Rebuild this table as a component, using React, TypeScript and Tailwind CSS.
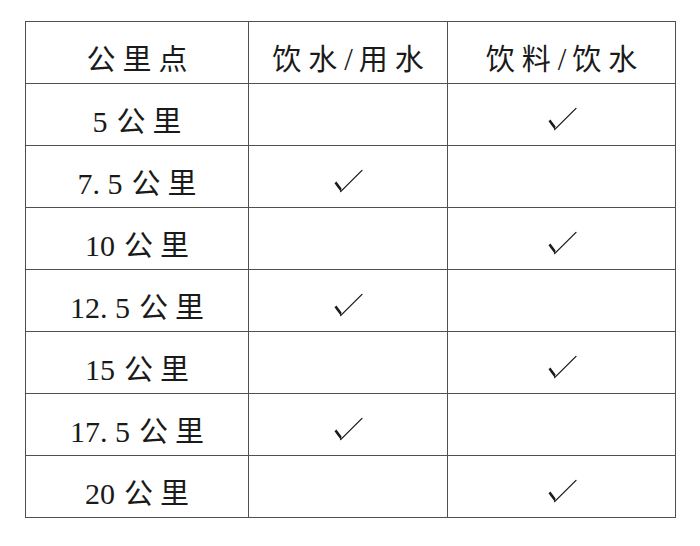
const rows: { km: string; water: boolean; drink: boolean }[] = [
  { km: '5', water: false, drink: true },
  { km: '7. 5', water: true, drink: false },
  { km: '10', water: false, drink: true },
  { km: '12. 5', water: true, drink: false },
  { km: '15', water: false, drink: true },
  { km: '17. 5', water: true, drink: false },
  { km: '20', water: false, drink: true },
];

function Check() {
  return (
    <svg width="30" height="24" viewBox="0 0 30 24" className="inline-block">
      <path d="M1.5 14.2 L3.4 12.6 L8.6 19.4 L7.6 22.6 Z" fill="#1a1a1a" />
      <path d="M7.6 22.6 L29 1.4" stroke="#1a1a1a" strokeWidth="1.3" strokeLinecap="round" fill="none" />
    </svg>
  );
}

function Cjk({ text }: { text: string }) {
  return <span className="text-[29px] tracking-[7px] mr-[-7px]">{text}</span>;
}

function Head({ a, b }: { a: string; b: string }) {
  return (
    <>
      <span className="text-[29px] tracking-[7px]">{a}</span>
      <span className="text-[31px] mr-[6px]">/</span>
      <Cjk text={b} />
    </>
  );
}

export default function App() {
  return (
    <div
      className="w-[700px] h-[546px] bg-white pt-[21px] pl-[25px] text-[#1a1a1a]"
      style={{ fontFamily: '"Liberation Serif", "Noto Sans CJK SC", serif' }}
    >
      <table className="table-fixed border-collapse text-[30px] leading-none">
        <colgroup>
          <col className="w-[223px]" />
          <col className="w-[199px]" />
          <col className="w-[228px]" />
        </colgroup>
        <thead>
          <tr className="h-[62px]">
            <th className="border border-[#505050] text-center align-middle pt-[14px] font-normal">
              <Cjk text="公里点" />
            </th>
            <th className="border border-[#505050] text-center align-middle pt-[14px] font-normal">
              <Head a="饮水" b="用水" />
            </th>
            <th className="border border-[#505050] text-center align-middle pt-[14px] font-normal">
              <Head a="饮料" b="饮水" />
            </th>
          </tr>
        </thead>
        <tbody>
          {rows.map((r) => (
            <tr key={r.km} className="h-[62px]">
              <td className="border border-[#505050] text-center align-middle pt-[14px]">
                <span>{r.km}</span>
                <span className="ml-[9px]">
                  <Cjk text="公里" />
                </span>
              </td>
              <td className="border border-[#505050] text-center align-middle pt-[3px]">
                {r.water && <Check />}
              </td>
              <td className="border border-[#505050] text-center align-middle pt-[3px]">
                {r.drink && <Check />}
              </td>
            </tr>
          ))}
        </tbody>
      </table>
    </div>
  );
}
